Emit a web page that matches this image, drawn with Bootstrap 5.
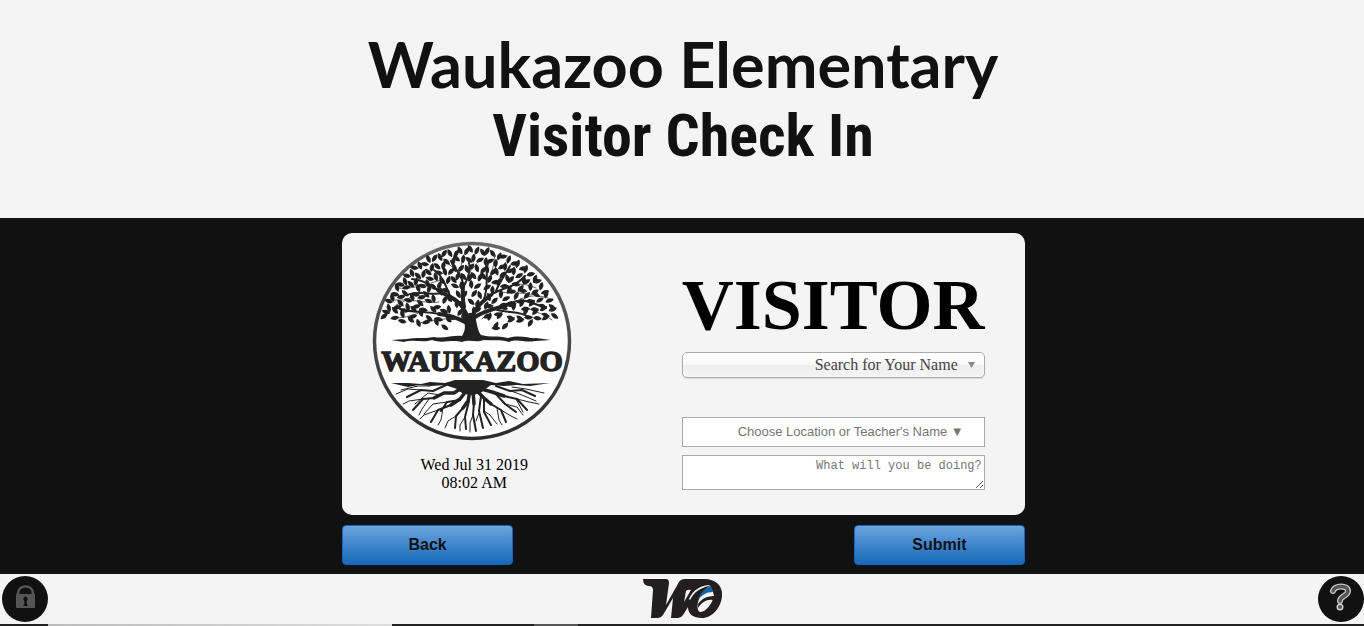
<!DOCTYPE html>
<html lang="en">
<head>
<meta charset="utf-8">
<meta name="viewport" content="width=device-width, initial-scale=1">
<title>Waukazoo Elementary Visitor Check In</title>
<link href="https://cdn.jsdelivr.net/npm/bootstrap@5.3.0/dist/css/bootstrap.min.css" rel="stylesheet">
<style>
  body { background: #f4f4f4; color: #111; font-family: "Liberation Serif", serif; line-height: 18px; }
  .page-head { height: 218px; padding: 24px 0 0 2px; }
  .school { font: 700 63px/80px Lato, "Open Sans", sans-serif; }
  .page-title { font: 700 60px/64px "Roboto Condensed", "Liberation Sans Narrow", sans-serif; }
  .stage { background: #111; padding: 15px 0 9px 3px; }
  .panel { width: calc(50% + 2px); min-width: 640px; }
  .pass { background: #f4f4f4; border-radius: 10px; min-height: 282px; padding: 8px 40px 23px 30px; margin-bottom: 10px; color: #000; }
  .crest { width: 200px; height: 200px; }
  .stamp { padding-top: 15px; width: 204px; }
  .entry { width: 303px; }
  .kind { font: 700 72px/72px "Liberation Serif", serif; padding-top: 28px; margin-bottom: 11px; white-space: nowrap; }
  .name-pick { appearance: none; height: 26px; border: 1px solid #aaa; border-radius: 5px; color: #444; font-size: 16px; padding: 0 26px 0 8px; text-align: right; text-align-last: right;
    background: url("data:image/svg+xml,%3Csvg xmlns='http://www.w3.org/2000/svg' width='7' height='6'%3E%3Cpath d='M0 0h7L3.500 6z' fill='%23888'/%3E%3C/svg%3E") no-repeat right 9px center, linear-gradient(#fff 20%, #f6f6f6 50%, #eee 52%, #f4f4f4);
    box-shadow: 0 0 3px #fff inset, 0 1px 1px rgba(0,0,0,.1); margin-bottom: 39px; }
  .field { border: 1px solid #a9a9a9; background: #fff; text-align: right; }
  .field::placeholder { color: #757575; }
  .place { height: 30px; font: 13px "Liberation Sans", sans-serif; padding: 0 20px 2px 2px; margin-bottom: 8px; }
  .doing { height: 35px; font: 12px/16px "Liberation Mono", monospace; padding: 2px; resize: both; }
  .act { width: 25%; height: 40px; border: 1px solid #1467b8; border-radius: 4px; background: linear-gradient(#6aa5de, #1668ba); color: #111; font: 700 16px "Liberation Sans", sans-serif; }
  .page-foot { height: 50px; padding-left: 2px; }
  .round-btn { width: 46px; height: 46px; background: #111; }
  .edge { height: 2px; background: linear-gradient(90deg, #222 48px, #bbb 48px, #ddd 392px, #222 392px, #222 534px, #555 534px, #555 578px, #222 578px); }
</style>
</head>
<body class="d-flex flex-column min-vh-100">
<header class="page-head text-center">
  <h1 class="school m-0">Waukazoo Elementary</h1>
  <h2 class="page-title m-0">Visitor Check In</h2>
</header>

<main class="stage flex-grow-1">
  <form class="panel mx-auto">
    <div class="pass d-flex justify-content-between">
      <div>
        <svg class="crest d-block" viewBox="0 0 200 200" role="img" aria-label="Waukazoo">
          <defs>
            <linearGradient id="ring" x1="0" y1="0" x2="0" y2="1"><stop offset="0" stop-color="#666"/><stop offset="1" stop-color="#2c2c2c"/></linearGradient>
            <path id="leaf" d="M0 4C-3 1-2.500-2 .5-5C3-2 3 1 0 4Z"/>
          </defs>
          <circle cx="100" cy="100" r="97.500" fill="#fff" stroke="url(#ring)" stroke-width="3.500"/>
          <g fill="none" stroke="#222" stroke-linecap="round" stroke-linejoin="round">
            <path stroke-width="4" d="M98 80C92 71 93 67 87 62C79 54 73 55 66 49M98 81C103 66 110 61 119 54M95 82C86 77 79 74 67 73M103 76C117 67 127 68 139 62M92 66C90 57 91 50 91 43"/>
            <path stroke-width="2" d="M66 49C57 43 51 39 40 38M67 73C53 70 40 72 28 68M91 44C91 34 82 28 79 20M91 47C96 37 99 30 97 22M112 58C117 44 113 34 116 22M119 54C130 46 141 48 153 35M124 50C128 40 133 34 138 25M139 62C151 56 159 62 174 67M78 55C74 45 70 34 62 29M120 67C134 73 147 69 157 76M71 52C60 55 48 49 35 54"/>
            <path stroke-width=".7" d="M54 43C45 46 37 48 25 47M49 71C39 76 30 76 20 78M81 75C71 81 61 77 48 82M69 39L59 42M87 35L90 20M82 27L72 20M115 39C122 31 121 23 123 14M134 47C146 41 154 43 164 47M148 58C160 54 166 54 176 57M152 66C163 70 173 74 180 79M126 50C137 54 146 50 159 54M97 32L106 21M67 61C56 63 43 58 22 59M119 68L110 78M49 51C41 53 35 60 24 64"/>
          </g>
          <g id="crown" fill="#222"></g>
          <path fill="#222" d="M91 69C95 75 98 71 101 72C105 75 104 88 109 94C119 97 125 94 136 97C149 93 158 98 164 97L179 99L163 100C153 102 145 97 137 101C127 98 120 100 112 99C103 102 99 98 90 101C79 98 71 103 60 99C51 102 42 98 32 101L19 99L35 98C45 96 51 98 62 96C72 98 81 94 90 95C94 89 94 81 89 76Z"/>
          <text x="100" y="130" text-anchor="middle" font-family="Liberation Serif, serif" font-weight="700" font-size="30" fill="#222" stroke="#222" stroke-width="1.400">WAUKAZOO</text>
          <path fill="#222" d="M19 142L36 142L49 143L58 141L73 142L83 139L111 139L124 142L137 140L151 143L178 142L158 145L145 144L132 145L119 144L112 149C108 155 91 156 85 148L73 144L59 145L47 144L36 146Z"/>
          <g fill="none" stroke="#222" stroke-linecap="round" stroke-linejoin="round">
            <path stroke-width="3.500" d="M91 146L82 152L72 152L62 157M95 149L88 158L79 164M98 150L96 160L91 167M101 150L102 163M103 148L112 157L119 163M106 147L120 151L132 155"/>
            <path stroke-width="2" d="M74 144L61 150L49 149L35 156M62 157L51 158L41 169M79 164L66 169L59 181M91 167L84 175L83 187M88 159L75 161L69 170M102 162L101 174L104 190M97 160L93 176L94 188M112 157L112 171L119 184M119 163L129 169L134 181M132 155L145 158L155 169M124 145L138 150L150 149L163 155M109 155L107 170L111 187M123 152L133 163L144 171"/>
            <path stroke-width="1" d="M49 149L36 148L24 153M58 145L46 145L29 149M51 158L37 160L31 163M57 158L50 168L47 174M66 169L52 174L48 178M71 167L69 179L66 184M84 175L76 180L73 187M93 176L88 184L88 190M101 174L98 182L98 191M112 170L118 174L125 183M107 172L104 180M129 169L139 175L145 178M125 167L127 179L130 184M145 158L157 161L167 163M144 158L151 171M139 150L150 154L164 160M140 146L154 148L172 152M133 163L145 166L151 174M75 161L61 163L52 173M68 154L56 152L43 163"/>
          </g>
        </svg>
        <div class="stamp text-center">Wed Jul 31 2019<br>08:02 AM</div>
      </div>
      <div class="entry">
        <div class="kind">VISITOR</div>
        <select class="name-pick d-block w-100" aria-label="Search for Your Name"><option>Search for Your Name</option></select>
        <input class="field place d-block w-100" type="text" aria-label="Location or teacher" placeholder="Choose Location or Teacher's Name ▼">
        <textarea class="field doing d-block w-100" aria-label="Reason for visit" placeholder="What will you be doing?"></textarea>
      </div>
    </div>
    <div class="d-flex justify-content-between">
      <button class="act" type="button">Back</button>
      <button class="act" type="submit">Submit</button>
    </div>
  </form>
</main>

<footer>
  <div class="page-foot d-flex justify-content-between align-items-center">
    <button class="round-btn rounded-circle border-0 p-0" type="button" aria-label="Lock">
      <svg class="d-block" width="46" height="46" viewBox="0 0 46 46"><path d="M16 19V17.500C16 8 31 8 31 17.500V19" fill="none" stroke="#555" stroke-width="2.500"/><rect x="14" y="18" width="19" height="14" rx="1" fill="#555"/><path d="M23.500 20.500a2.300 2.300 0 0 1 1.200 4.200V27l1 3h-4.400l1-3v-2.300a2.300 2.300 0 0 1 1.200-4.200Z" fill="#111"/></svg>
    </button>
    <svg width="82" height="42" viewBox="0 0 82 42" role="img" aria-label="WO">
      <path fill="#231f20" d="M1 1H24Q27 1 27 5L24 27L37 4Q39 1 43 1H62C74 1 81 8 80 18C79 30 70 40 60 40C51 40 46 36 46 29L41 37Q39 40 36 40H29L31 20L21 37Q19 40 16 40H9L11 12Q11 8 7 8Q1 8 1 1Z"/>
      <path fill="#f4f4f4" d="M44 13L42 24L49 12Q46 11 44 13ZM47 21C51 12 59 7 68 7L67 8C58 10 52 14 48 22ZM56 32C54 25 58 14 68 8L71 14L72 18C70 26 64 34 58 34Q57 34 56 32Z"/>
      <path fill="#1464ad" d="M57 19C60 13 64 10 69 8L71 14C64 14 60 17 56 22Z"/>
      <path fill="#231f20" d="M56 26C60 20 66 18 73 18L71 22C65 21 60 24 56 30Z"/>
    </svg>
    <button class="round-btn rounded-circle border-0 p-0" type="button" aria-label="Help">
      <svg class="d-block" width="46" height="46" viewBox="0 0 46 46" fill="none" stroke-linecap="round"><g stroke="#ccc" stroke-width="6"><path d="M15 15C17 9 30 9 30 15C30 20 22 20 22 25"/><path d="M22 31v.1" stroke-width="7"/></g><g stroke="#555" stroke-width="3.500"><path d="M15 15C17 9 30 9 30 15C30 20 22 20 22 25"/><path d="M22 31v.1" stroke-width="4"/></g></svg>
    </button>
  </div>
  <div class="edge"></div>
</footer>
<script src="https://cdn.jsdelivr.net/npm/bootstrap@5.3.0/dist/js/bootstrap.bundle.min.js"></script>
<script>
  // Leaves of the crest: arcs of leaves that fan out from the trunk.
  let out = '';
  for (let ring = 0; ring < 8; ring++) {
    const rx = 86 - ring * 8.5, ry = 82 - ring * 8.5, count = 44 - ring * 4;
    for (let i = 0; i < count; i++) {
      if (ring > 3 && (i * 5 + ring) % 3 === 0) continue;
      const a = Math.PI * (0.06 + 0.88 * (i + (ring % 2) / 2) / (count - 0.5));
      const wob = ((i * 37 + ring * 53) % 11 - 5) / 5;
      const x = 98 - Math.cos(a) * rx + wob, y = 92 - Math.sin(a) * ry + wob * 1.5;
      const turn = a * 180 / Math.PI - 90 + ((i * 71 + ring * 29) % 13 - 6) * 9;
      out += `<use href="#leaf" transform="translate(${x.toFixed(1)} ${y.toFixed(1)}) rotate(${turn.toFixed(0)})"/>`;
    }
  }
  document.getElementById('crown').innerHTML = out;
</script>
</body>
</html>
